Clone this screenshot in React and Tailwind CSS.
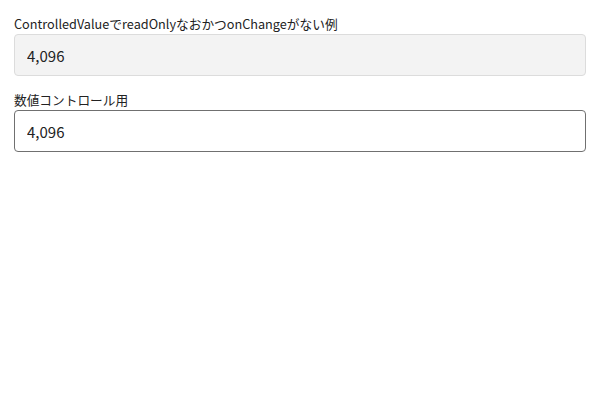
export default function App() {
  const font = { fontFamily: '"Noto Sans CJK JP", "Noto Sans", sans-serif' };
  return (
    <div className="flex flex-col gap-[14px] px-[14px] pt-[14px]" style={font}>
      <label className="flex flex-col gap-px">
        <span className="text-[12.7px] leading-[19px] text-[#222]">ControlledValueでreadOnlyなおかつonChangeがない例</span>
        <input
          readOnly
          value="4,096"
          className="h-[42px] w-full rounded-[4px] border border-[#dcdcdc] bg-[#f3f3f3] px-[12px] text-[15px] text-[#222] outline-none"
        />
      </label>
      <label className="flex flex-col gap-px">
        <span className="text-[12.7px] leading-[19px] text-[#222]">数値コントロール用</span>
        <input
          defaultValue="4,096"
          className="h-[42px] w-full rounded-[4px] border border-[#707070] bg-white px-[12px] text-[15px] text-[#222] outline-none"
        />
      </label>
    </div>
  );
}
